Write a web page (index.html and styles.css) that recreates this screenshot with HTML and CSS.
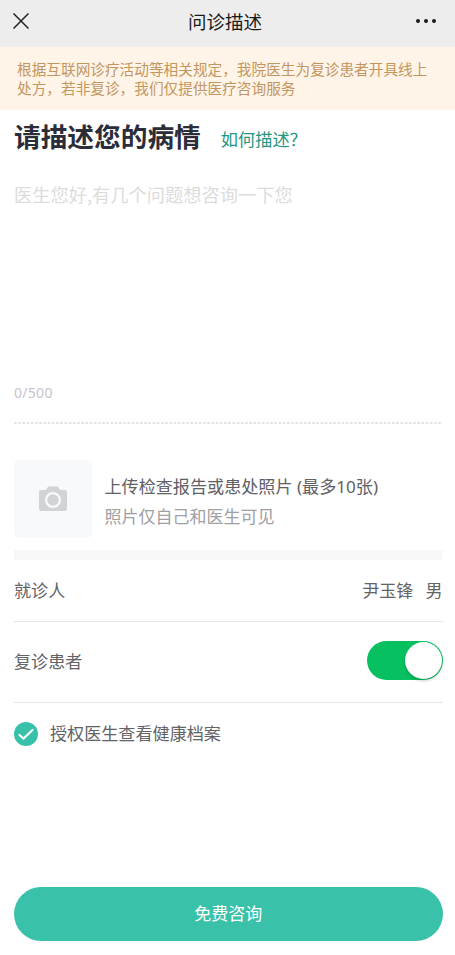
FILE: index.html
```html
<!DOCTYPE html>
<html lang="zh-CN">
<head>
<meta charset="utf-8">
<title>问诊描述</title>
<link rel="stylesheet" href="styles.css">
</head>
<body>
<header class="bar">
  <svg class="close" viewBox="0 0 16 16"><path d="M.5 .5L15.500 15.500M15.500 .5L.5 15.500"/></svg>
  <h1>问诊描述</h1>
  <svg class="more" viewBox="0 0 20 6"><circle cx="2" cy="3" r="2"/><circle cx="10" cy="3" r="2"/><circle cx="18" cy="3" r="2"/></svg>
</header>
<p class="notice">根据互联网诊疗活动等相关规定，我院医生为复诊患者开具线上<br>处方，若非复诊，我们仅提供医疗咨询服务</p>
<main>
  <section class="describe">
    <div class="heading"><h2>请描述您的病情</h2><a>如何描述？</a></div>
    <p class="placeholder">医生您好,有几个问题想咨询一下您</p>
    <p class="count">0/500</p>
    <svg class="dashes" width="428" height="2"><path d="M0 1H428"/></svg>
  </section>
  <section class="upload">
    <div class="thumb"><svg viewBox="0 0 30 26"><path fill-rule="evenodd" d="M3 4H8L9.500 1.500Q10 .5 11 .5H19Q20 .5 20.500 1.500L22 4H27Q29 4 29 6V23Q29 25 27 25H3Q1 25 1 23V6Q1 4 3 4ZM15 6A8 8 0 1 0 15 22A8 8 0 1 0 15 6ZM15 8.200A5.800 5.800 0 1 1 15 19.800A5.800 5.800 0 1 1 15 8.200Z"/></svg></div>
    <div><p class="up-title">上传检查报告或患处照片 (最多10张)</p><p class="up-sub">照片仅自己和医生可见</p></div>
  </section>
  <div class="divider"></div>
  <div class="row patient"><span>就诊人</span><span class="name"><span>尹玉锋</span><span>男</span></span></div>
  <div class="row revisit"><span>复诊患者</span><span class="switch"><i></i></span></div>
  <div class="agree"><svg viewBox="0 0 24 24"><circle cx="12" cy="12" r="12"/><path d="M5.500 13L9.500 16.500L18.500 8"/></svg><span>授权医生查看健康档案</span></div>
</main>
<button>免费咨询</button>
</body>
</html>
```
FILE: styles.css
```css
* { box-sizing: border-box; margin: 0; padding: 0; }
body { height: 955px; display: flex; flex-direction: column; background: #fff; font-family: "Noto Sans CJK SC", sans-serif; color: #636366; overflow: hidden; }
.bar { height: 47px; flex: none; background: #ededed; display: grid; grid-template-columns: 60px 1fr 60px; align-items: center; padding: 0 19px 5px 13px; }
.bar h1 { font-size: 18.5px; font-weight: 400; color: #191919; line-height: 26px; text-align: center; padding-left: 1px; }
.close { width: 16px; height: 16px; fill: none; stroke: #222; stroke-width: 1.5; }
.more { width: 20px; height: 6px; fill: #191919; justify-self: end; }
.notice { height: 63px; flex: none; background: #fff4e7; color: #c39660; font-size: 14.67px; line-height: 19px; padding: 12px 17px 0; white-space: nowrap; }
main { flex: 1; padding: 0 12.5px 0 14px; }
.describe { height: 314px; display: flex; flex-direction: column; }
.heading { display: flex; align-items: flex-start; gap: 20px; height: 54px; white-space: nowrap; }
.heading h2 { font-size: 26.7px; font-weight: 700; line-height: 52px; color: #2b2d38; }
.heading a { font-size: 17.2px; line-height: 26px; margin-top: 16px; color: #259681; }
.placeholder { margin-top: 17px; font-size: 18.25px; line-height: 26px; color: #dcdcdc; }
.count { margin-top: auto; margin-bottom: 19px; font: 14px/20px "Noto Sans", sans-serif; letter-spacing: .3px; color: #c4c4ca; }
.dashes { display: block; flex: none; stroke: #dcdcdc; stroke-width: 1.5; stroke-dasharray: 2.7 1.5; }
.upload { height: 126px; display: flex; padding-top: 36px; gap: 12.5px; white-space: nowrap; }
.thumb { width: 78px; height: 78px; background: #f8f9fb; border-radius: 5px; display: grid; place-items: center; }
.thumb svg { width: 30px; height: 26px; fill: #d2d3d5; }
.up-title { margin-top: 12px; font: 17.1px/30px "Noto Sans", "Noto Sans CJK SC", sans-serif; color: #606066; }
.up-sub { font-size: 17px; line-height: 30px; margin-top: -1px; color: #a0a0a4; }
.divider { height: 10px; background: #f8f8f8; }
.row { display: flex; align-items: center; justify-content: space-between; border-bottom: 1px solid #e5e5e5; font-size: 17.1px; padding-bottom: 2px; }
.patient { height: 62px; }
.revisit { height: 81px; padding-bottom: 3px; }
.name { display: flex; gap: 12px; }
.switch { width: 76px; height: 39px; border-radius: 20px; background: #07c160; padding: 1px; display: flex; justify-content: flex-end; }
.switch i { width: 37px; height: 37px; border-radius: 50%; background: #fff; box-shadow: 0 2px 3px #0003; }
.agree { height: 62px; display: flex; align-items: center; gap: 12px; font-size: 17.1px; }
.agree span { padding-bottom: 3px; }
.agree svg { width: 24px; height: 24px; fill: #38c1a9; }
.agree path { fill: none; stroke: #fff; stroke-width: 2.2; stroke-linecap: round; }
button { flex: none; height: 54px; margin: 0 12.5px 14.5px 14px; padding-bottom: 2px; border: 0; border-radius: 27px; background: #39c1a9; color: #fff; font: 17px "Noto Sans CJK SC", sans-serif; }
```
